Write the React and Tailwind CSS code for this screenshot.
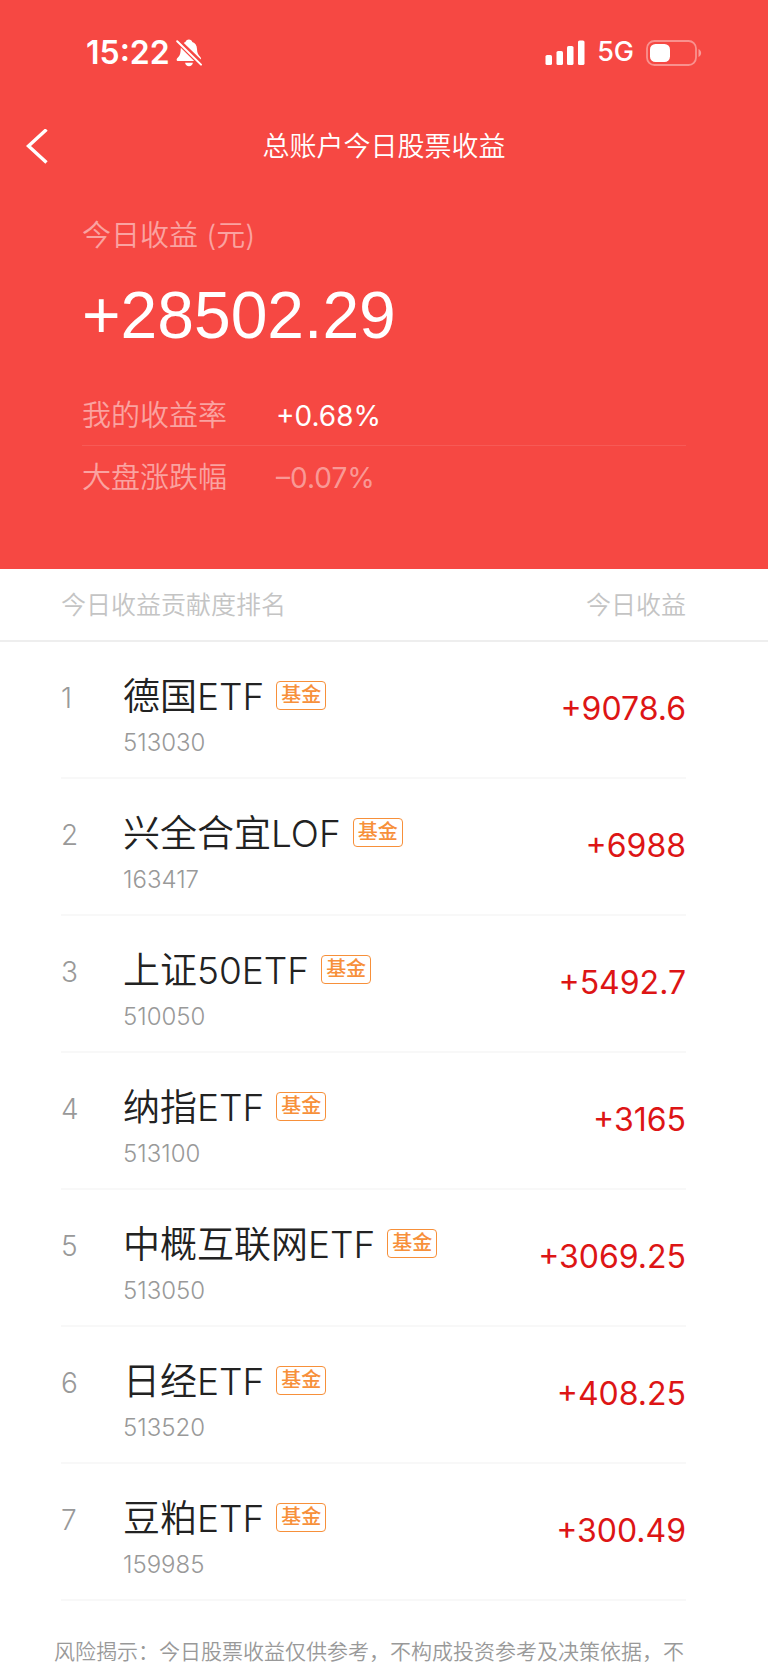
import React from "react";

const holdings = [
  { name: "德国ETF", code: "513030", profit: "+9078.6" },
  { name: "兴全合宜LOF", code: "163417", profit: "+6988" },
  { name: "上证50ETF", code: "510050", profit: "+5492.7" },
  { name: "纳指ETF", code: "513100", profit: "+3165" },
  { name: "中概互联网ETF", code: "513050", profit: "+3069.25" },
  { name: "日经ETF", code: "513520", profit: "+408.25" },
  { name: "豆粕ETF", code: "159985", profit: "+300.49" },
];

function BellOff() {
  return (
    <svg viewBox="0 0 26 28" className="h-7 w-[26px]" aria-hidden="true">
      <path
        fill="#fff"
        d="M7.8 3.9C8.4 3.5 9 3.2 9.5 3.1C9.8 1.6 11.2 0.6 12.9 0.6S16 1.6 16.3 3.1C19.3 4.1 20.9 6.7 21 10C21.1 13.6 22 15.5 24.3 18C24.9 18.7 25.2 19.6 24.9 20.6ZM4.9 8.3L18.8 22H2.2C0.9 22 0.4 21.2 0.7 20.2C1.1 19 2.6 18 3.6 16.2C4.7 14.2 4.6 11 4.9 8.3ZM9.1 23.7H16.9C16.5 25.8 15.1 27.2 13 27.2S9.5 25.8 9.1 23.7Z"
      />
      <path d="M1.2 2.2L25 25.6" stroke="#f64843" strokeWidth="4.4" />
      <path d="M1.2 2.2L25 25.6" stroke="#fff" strokeWidth="2" strokeLinecap="round" />
    </svg>
  );
}

function Signal() {
  return (
    <svg viewBox="0 0 40 26" className="h-[26px] w-10" fill="#fff" aria-hidden="true">
      <rect x="0.5" y="15" width="6.5" height="10" rx="1.6" />
      <rect x="11.5" y="11" width="6.5" height="14" rx="1.6" />
      <rect x="22" y="6" width="6.5" height="19" rx="1.6" />
      <rect x="33" y="0.5" width="6.5" height="24.5" rx="1.6" />
    </svg>
  );
}

function Battery() {
  return (
    <svg viewBox="0 0 56 26" className="h-[26px] w-14" aria-hidden="true">
      <rect x="1" y="1" width="49" height="24" rx="7.5" fill="none" stroke="#fff" strokeOpacity="0.4" strokeWidth="1.8" />
      <rect x="4" y="4" width="20" height="18" rx="5.5" fill="#fff" />
      <path d="M52.5 9C56 10.5 56 15.5 52.5 17Z" fill="#fff" fillOpacity="0.45" />
    </svg>
  );
}

function Summary() {
  return (
    <section className="px-[82px] pt-7">
      <p className="text-[29px] leading-[38px] text-white/50">今日收益 (元)</p>
      <p className="mt-6 font-['Liberation_Sans',sans-serif] text-[66px] leading-[72px]">+28502.29</p>
      <dl className="mt-9 text-[29px]">
        <div className="flex border-b border-white/10 leading-[58px]">
          <dt className="w-[194px] text-white/50">我的收益率</dt>
          <dd className="text-[28px] font-normal">+0.68%</dd>
        </div>
        <div className="flex leading-[64px]">
          <dt className="w-[194px] text-white/50">大盘涨跌幅</dt>
          <dd className="text-[28px] font-normal text-white/45">–0.07%</dd>
        </div>
      </dl>
    </section>
  );
}

function HoldingRow({ rank, item }) {
  return (
    <tr>
      <td className="w-[123px] pl-[61px]">
        <div className="h-[137px] border-b-2 border-[#f8f8f8] pt-9 text-[28px] leading-10 text-[#999]">{rank}</div>
      </td>
      <td>
        <div className="h-[137px] border-b-2 border-[#f8f8f8] pt-8">
          <div className="flex items-center gap-3 text-[37px] leading-[46px] text-[#222]">
            {item.name}
            <span className="mb-1 flex h-[29px] w-[50px] items-center justify-center rounded-[4px] border border-[#f7903a] text-[20px] leading-6 font-medium text-[#f7903a]">
              基金
            </span>
          </div>
          <div className="mt-[7px] text-[24px] leading-8 text-[#999]">{item.code}</div>
        </div>
      </td>
      <td className="pr-[82px]">
        <div className="h-[137px] border-b-2 border-[#f8f8f8] text-right text-[32px] leading-[134px] font-normal text-[#dd1515]">
          {item.profit}
        </div>
      </td>
    </tr>
  );
}

export default function App() {
  return (
    <div className="min-h-screen bg-white font-['Inter','Noto_Sans_CJK_SC',sans-serif] font-[350]">
      <header className="bg-[#f64843] pb-[59px] text-white">
        <div className="flex h-[105px] items-center justify-between pr-[66px] pl-[86px]">
          <div className="flex items-center gap-1.5 text-[32px] font-semibold">
            15:22
            <BellOff />
          </div>
          <div className="flex items-center gap-3 text-[27px] font-medium">
            <Signal />
            5G
            <Battery />
          </div>
        </div>
        <nav className="grid h-[84px] grid-cols-[82px_1fr_82px] items-center">
          <button type="button" aria-label="返回" className="pl-[26px]">
            <svg viewBox="0 0 22 36" className="h-9 w-[22px]" fill="none" stroke="#fff" strokeWidth="3.4">
              <path d="M20.5 0.5L2.5 17L20.5 33.5" />
            </svg>
          </button>
          <h1 className="text-center text-[27px] font-[350]">总账户今日股票收益</h1>
        </nav>
        <Summary />
      </header>

      <table className="w-full">
        <thead>
          <tr className="h-[72px] border-b-2 border-[#eee] text-[25px] text-[#c4c4c4]">
            <th colSpan={2} className="pt-0.5 pl-[61px] text-left font-[350]">今日收益贡献度排名</th>
            <th className="pt-0.5 pr-[82px] text-right font-[350]">今日收益</th>
          </tr>
        </thead>
        <tbody>
          {holdings.map((item, idx) => (
            <HoldingRow key={item.code} rank={idx + 1} item={item} />
          ))}
        </tbody>
      </table>

      <p className="px-[54px] pt-9 text-[21px] leading-[30px] whitespace-nowrap text-[#999]">
        风险揭示：今日股票收益仅供参考，不构成投资参考及决策依据，不
      </p>
    </div>
  );
}
